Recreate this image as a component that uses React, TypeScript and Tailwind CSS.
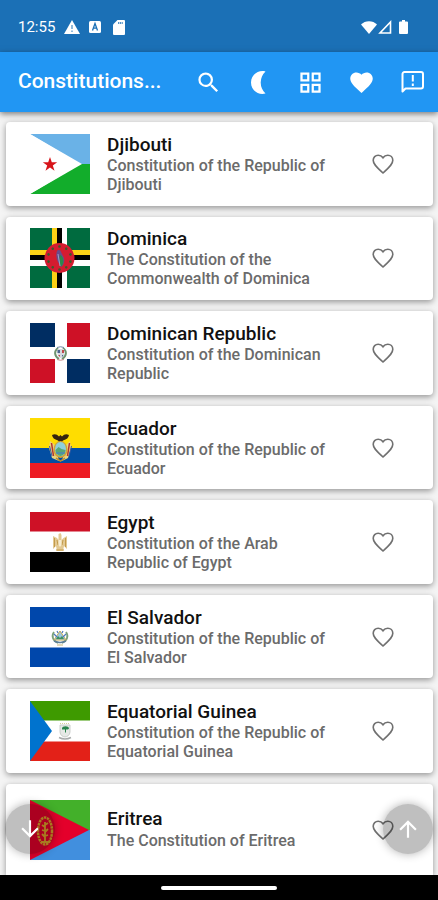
import { useState } from "react";
import type { ReactNode } from "react";
import { MdArrowDownward, MdArrowUpward, MdFavorite, MdOutlineGridView, MdSearch } from "react-icons/md";

const flagClass = "h-[60px] w-[60px] shrink-0";

function Djibouti() {
    return (
        <svg viewBox="0 0 60 60" className={flagClass} aria-hidden="true">
            <path d="M0 0h60v30H50z" fill="#6ab2e7" />
            <path d="M0 60h60V30H50z" fill="#12ad2b" />
            <path d="M0 0L52 30L0 60z" fill="#fff" />
            <path d="M20 23l1.800 5.200h5.400l-4.400 3.300 1.700 5.200-4.500-3.200-4.500 3.200 1.700-5.200-4.400-3.300h5.400z" fill="#d7141a" />
        </svg>
    );
}

function Dominica() {
    const stars = [0, 36, 72, 108, 144, 180, 216, 252, 288, 324];
    return (
        <svg viewBox="0 0 60 60" className={flagClass} aria-hidden="true">
            <path d="M0 0h60v60H0z" fill="#006b3f" />
            <path d="M32 0h5v60h-5zM0 32h60v6H0z" fill="#fff" />
            <path d="M27 0h5v60h-5zM0 27h60v5H0z" fill="#000" />
            <path d="M22 0h5v60h-5zM0 22h60v5H0z" fill="#fcd116" />
            <circle cx="29.500" cy="30" r="15" fill="#d41c30" />
            {stars.map((a) => (
                <circle key={a} cx="29.500" cy="18.500" r="1.300" fill="#3c5a2b" transform={`rotate(${a} 29.5 30)`} />
            ))}
            <path d="M27 23c1-2 4-1 4 1l3 6c1 4-1 8-3 9l-3-5c-2-4-2-8-1-11z" fill="#6a4a8c" />
            <path d="M30 27c3 1 4 5 3 9l-2 3c-2-4-2-8-1-12z" fill="#2b8a4b" />
            <path d="M28 26l2 12" stroke="#9aa3c8" strokeWidth="1" />
        </svg>
    );
}

function DominicanRepublic() {
    return (
        <svg viewBox="0 0 60 60" className={flagClass} aria-hidden="true">
            <path d="M0 0h60v60H0z" fill="#fff" />
            <path d="M0 0h25v24H0zM37 36h23v24H37z" fill="#002d62" />
            <path d="M37 0h23v24H37zM0 36h25v24H0z" fill="#ce1126" />
            <path d="M28 25c-4 3-4 8 1 11M33 25c4 3 4 8-1 11" fill="none" stroke="#6f9470" strokeWidth="2" />
            <path d="M27.500 26h6.500v5c0 2-2 4-3.200 4S27.500 33 27.500 31z" fill="#d5d9df" />
            <path d="M27.500 27h2.500v3h-2.500zM32 32h1.500l-1.500 2z" fill="#4a628d" />
            <path d="M32 27h2v3h-2zM28 32h2v2z" fill="#c24b50" />
            <path d="M27 24.500q3.500-1.500 7 0" fill="none" stroke="#6f86a3" />
            <path d="M27 36.500q3.500 1.500 7 0" fill="none" stroke="#c98a8a" />
        </svg>
    );
}

function Ecuador() {
    return (
        <svg viewBox="0 0 60 60" className={flagClass} aria-hidden="true">
            <path d="M0 0h60v30H0z" fill="#ffdd00" />
            <path d="M0 30h60v15H0z" fill="#034ea2" />
            <path d="M0 45h60v15H0z" fill="#ed1c24" />
            <path d="M20 23l-1 7 3 10 7 3-4-16zM40 23l1 7-3 10-6 3 4-16z" fill="#ead27c" />
            <path d="M21.500 25l2 13M39.500 25l-2 13" stroke="#b5332e" strokeWidth="1.500" />
            <path d="M19.500 28l2.500 10M41.500 28l-2.500 10" stroke="#3b5aa0" strokeWidth="1" />
            <path d="M22 17q4-2 7 1.500l1.500-1.500 1.500 1.500q3-3.500 7-1.500-.5 4-6 5.500l-1 1.500h-3l-1-1.500q-5.500-1.500-6-5.500z" fill="#35240f" />
            <ellipse cx="30.500" cy="31.500" rx="7" ry="8.500" fill="#d0a438" />
            <ellipse cx="30.500" cy="31" rx="5.500" ry="7" fill="#8fd0dc" />
            <path d="M25.500 32l3-3 3 2 4 1c0 3-3 6-5 6s-5-3-5-6z" fill="#57a878" />
            <path d="M26 35h9" stroke="#4d87b5" strokeWidth="1.500" />
            <path d="M26 40l4.500 3 4.500-3" fill="none" stroke="#b98a2d" strokeWidth="1.500" />
        </svg>
    );
}

function Egypt() {
    return (
        <svg viewBox="0 0 60 60" className={flagClass} aria-hidden="true">
            <path d="M0 0h60v60H0z" fill="#fff" />
            <path d="M0 0h60v19.500H0z" fill="#ce1126" />
            <path d="M0 40h60v20H0z" fill="#000" />
            <path d="M23 24l4 2 1.500 2V22l2-1 1 2v5l2-2 3.500-2v13l-3-3-1 5h-6l-1-5-3 3z" fill="#e3c992" />
            <path d="M24.500 26v9M35.500 26v9M27 28l1 5M33 28l-1 5M26 38h8" stroke="#c39b4b" strokeWidth="1" />
            <path d="M28.500 28h3v5l-1.500 2-1.500-2z" fill="#f8edd0" />
        </svg>
    );
}

function ElSalvador() {
    return (
        <svg viewBox="0 0 60 60" className={flagClass} aria-hidden="true">
            <path d="M0 0h60v60H0z" fill="#fff" />
            <path d="M0 0h60v20H0zM0 40.500h60V60H0z" fill="#0047ab" />
            <path d="M24 25c-3 4-1 9 4 11M36 25c3 4 1 9-4 11" fill="none" stroke="#7ba17a" strokeWidth="1.800" />
            <path d="M30 24l6 9H24z" fill="#9cc7db" stroke="#c6ac55" strokeWidth="1" />
            <path d="M26 32l2-3 2 2 2-2 2 3z" fill="#3c9060" />
            <path d="M24 27l3 3M36 27l-3 3M27 24l1 2M33 24l-1 2" stroke="#4d78bd" strokeWidth="1.200" />
            <path d="M24 34q6 3 12 0" fill="none" stroke="#5c7f9a" strokeWidth="1.500" />
            <path d="M27 38h6" stroke="#c9b879" strokeWidth="1" />
        </svg>
    );
}

function EquatorialGuinea() {
    return (
        <svg viewBox="0 0 60 60" className={flagClass} aria-hidden="true">
            <path d="M0 0h60v60H0z" fill="#fff" />
            <path d="M0 0h60v19.500H0z" fill="#3e9a00" />
            <path d="M0 40.500h60V60H0z" fill="#e32118" />
            <path d="M0 0l22 30L0 60z" fill="#0073ce" />
            <path d="M30 24h10v7c0 3-3 5-5 5s-5-2-5-5z" fill="#e6e9e6" stroke="#c0c4c0" strokeWidth="0.800" />
            <path d="M32 27.500c0-3 7-3 7 0l-1 1h-2v3h-1v-3h-3z" fill="#28834b" />
            <path d="M29 36.500q6 3 12 0" fill="none" stroke="#a9abab" strokeWidth="1.500" />
            <path d="M30 22.500h10" stroke="#d8cf9d" strokeWidth="1" strokeDasharray="1 1" />
        </svg>
    );
}

function Eritrea() {
    return (
        <svg viewBox="0 0 60 60" className={flagClass} aria-hidden="true">
            <path d="M0 0h60v30H0z" fill="#43b02a" />
            <path d="M0 30h60v30H0z" fill="#418fde" />
            <path d="M0 0l59 30L0 60z" fill="#e4002b" />
            <ellipse cx="15" cy="31" rx="7" ry="13.500" fill="none" stroke="#e0a52b" strokeWidth="2.500" strokeDasharray="2.500 0.700" />
            <path d="M15 22v20M15 27l-3-2M15 25l3-2M15 31l-3-1M15 32l3-3M15 37l-3-3M15 36l3-1M11 42h8" stroke="#e0a52b" strokeWidth="1.800" />
        </svg>
    );
}

type Country = { name: string; title: string; flag: ReactNode };

const countries: Country[] = [
    { name: "Djibouti", title: "Constitution of the Republic of Djibouti", flag: <Djibouti /> },
    { name: "Dominica", title: "The Constitution of the Commonwealth of Dominica", flag: <Dominica /> },
    { name: "Dominican Republic", title: "Constitution of the Dominican Republic", flag: <DominicanRepublic /> },
    { name: "Ecuador", title: "Constitution of the Republic of Ecuador", flag: <Ecuador /> },
    { name: "Egypt", title: "Constitution of the Arab Republic of Egypt", flag: <Egypt /> },
    { name: "El Salvador", title: "Constitution of the Republic of El Salvador", flag: <ElSalvador /> },
    { name: "Equatorial Guinea", title: "Constitution of the Republic of Equatorial Guinea", flag: <EquatorialGuinea /> },
];

function StatusBar() {
    return (
        <div className="flex h-[52px] items-center bg-[#1b70b6] px-[18px] pt-0.5 text-white">
            <span className="text-[15px]">12:55</span>
            <svg viewBox="0 0 16 14" className="ml-[9px] h-[14px] w-4" aria-hidden="true">
                <path d="M8 0l8 14H0z" fill="#fff" />
                <path d="M8 5v4M8 10.500v1.500" stroke="#6da3d0" strokeWidth="1.500" />
            </svg>
            <svg viewBox="0 0 12 12" className="ml-[9px] h-3 w-3" aria-hidden="true">
                <rect width="12" height="12" rx="1.500" fill="#fff" />
                <path d="M3.500 9.500L6 2.500l2.500 7M4.300 7.200h3.400" fill="none" stroke="#1b70b6" strokeWidth="1.300" />
            </svg>
            <svg viewBox="0 0 12 15" className="ml-3 h-[15px] w-3" aria-hidden="true">
                <path d="M4.500 0H11a1 1 0 011 1v13a1 1 0 01-1 1H1a1 1 0 01-1-1V4.500z" fill="#fff" />
                <path d="M5 3h5" stroke="#1b70b6" strokeWidth="1.300" strokeDasharray="1.200 0.600" />
            </svg>
            <svg viewBox="0 0 16 13" className="ml-auto h-[13px] w-4" aria-hidden="true">
                <path d="M8 13L0 3.500C4-1 12-1 16 3.500z" fill="#fff" />
            </svg>
            <svg viewBox="0 0 14 14" className="ml-px h-[14px] w-[14px]" aria-hidden="true">
                <path d="M12.500 2v11H2z" fill="none" stroke="#fff" strokeWidth="1.600" />
            </svg>
            <svg viewBox="0 0 9 14" className="ml-[7px] mr-3 h-[14px] w-[9px]" aria-hidden="true">
                <path d="M3 0h3v1.500h2a1 1 0 011 1V13a1 1 0 01-1 1H1a1 1 0 01-1-1V2.500a1 1 0 011-1h2z" fill="#fff" />
            </svg>
        </div>
    );
}

function AppBar() {
    return (
        <header className="relative z-10 flex h-[60px] items-center bg-[#2196f3] pl-[18px] pr-3 text-white shadow-[0_2px_6px_rgba(0,0,0,0.5)]">
            <h1 className="min-w-0 flex-1 text-[21px] font-medium">Constitutions...</h1>
            <div className="flex items-center gap-6">
                <button aria-label="Search">
                    <MdSearch size={27} />
                </button>
                <button aria-label="Dark mode">
                    <svg viewBox="0 0 27 27" className="h-[27px] w-[27px]" aria-hidden="true">
                        <path d="M19.500 2.500a15 15 0 000 22C12 26.500 5 21 5 13.500S12 .5 19.500 2.500z" fill="currentColor" />
                    </svg>
                </button>
                <button aria-label="Grid view">
                    <MdOutlineGridView size={27} />
                </button>
                <button aria-label="Favorites">
                    <MdFavorite size={27} />
                </button>
                <button aria-label="Feedback">
                    <svg viewBox="0 0 27 27" className="h-[27px] w-[27px]" fill="none" stroke="currentColor" strokeWidth="2" aria-hidden="true">
                        <path d="M3.500 22.500V5a2 2 0 012-2h16.500a2 2 0 012 2v12.500a2 2 0 01-2 2H6.500z" strokeLinejoin="round" />
                        <path d="M13.800 6v6.500M13.800 14.500v2.500" />
                    </svg>
                </button>
            </div>
        </header>
    );
}

function FavoriteButton({ name }: { name: string }) {
    const [saved, setSaved] = useState(false);

    return (
        <button
            aria-label={"Add " + name + " to favorites"}
            aria-pressed={saved}
            onClick={() => setSaved(!saved)}
            className="ml-auto shrink-0 text-[#707070]"
        >
            <svg viewBox="0 0 26 26" className="h-[26px] w-[26px]" fill={saved ? "currentColor" : "none"} stroke="currentColor" strokeWidth="1.600" aria-hidden="true">
                <path d="M13 22L11.500 20.600C6.200 15.800 3.200 13 3.200 9.300 3.200 6.400 5.400 4.200 8.200 4.200c1.900 0 3.700 1 4.800 2.600 1.100-1.600 2.900-2.600 4.800-2.600 2.800 0 5 2.200 5 5.100 0 3.700-3 6.500-8.300 11.300z" />
            </svg>
        </button>
    );
}

const cardClass = "flex items-center rounded bg-white pl-6 pr-[37px] shadow-[0_2px_6px_rgba(0,0,0,0.4)]";
const nameClass = "text-[19px] leading-[22px] font-medium text-[#111]";
const fabClass =
    "absolute bottom-[21px] flex h-[50px] w-[50px] items-center justify-center rounded-full bg-black/25 text-white shadow-[0_0_10px_rgba(0,0,0,0.3)]";

export default function App() {
    return (
        <div className="flex min-h-screen flex-col bg-[#f4f4f4] font-[Roboto,sans-serif]">
            <StatusBar />
            <AppBar />

            <main className="relative flex flex-1 flex-col">
                <ul className="flex flex-1 flex-col gap-[11px] pl-1.5 pr-[5px] pt-[10px]">
                    {countries.map((c) => (
                        <li key={c.name} className={cardClass + " flex-1"}>
                            {c.flag}
                            <div className="ml-[17px] w-[232px]">
                                <h2 className={nameClass}>{c.name}</h2>
                                <p className="text-base leading-[19px] font-medium text-[#6b6b6b]">{c.title}</p>
                            </div>
                            <FavoriteButton name={c.name} />
                        </li>
                    ))}
                    <li className={cardClass + " h-[91px] rounded-b-none"}>
                        <Eritrea />
                        <div className="ml-[17px] w-[232px]">
                            <h2 className={nameClass}>Eritrea</h2>
                            <p className="text-base leading-[22px] font-medium text-[#6b6b6b]">The Constitution of Eritrea</p>
                        </div>
                        <FavoriteButton name="Eritrea" />
                    </li>
                </ul>

                <button aria-label="Scroll to bottom" className={fabClass + " left-[5px]"}>
                    <MdArrowDownward size={26} />
                </button>
                <button aria-label="Scroll to top" className={fabClass + " right-[5px]"}>
                    <MdArrowUpward size={26} />
                </button>
            </main>

            <footer className="relative z-10 flex h-[25px] items-center justify-center bg-black">
                <div className="h-1 w-[116px] rounded-full bg-white" />
            </footer>
        </div>
    );
}
